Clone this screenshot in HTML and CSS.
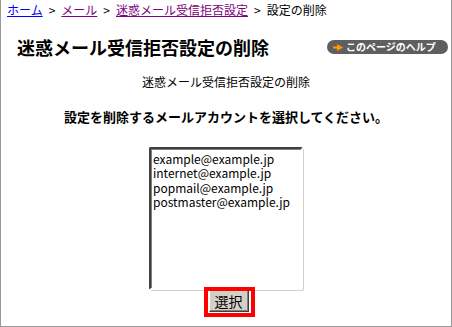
FILE: index.html
```html
<!DOCTYPE html>
<html lang="ja">
<head>
    <meta charset="UTF-8">
    <title>設定の削除</title>
    <link rel="stylesheet" href="styles.css">
</head>
<body>
    <div class="page">
        <div class="crumbs">
            <a href="#" class="link-new">ホーム</a><span class="sep">&gt;</span><a href="#" class="link-visited">メール</a><span class="sep">&gt;</span><a href="#" class="link-visited">迷惑メール受信拒否設定</a><span class="sep">&gt;</span>設定の削除
        </div>

        <div class="page-head">
            <h1>迷惑メール受信拒否設定の削除</h1>
            <a href="#" class="help-btn">
                <svg width="10" height="7" viewBox="0 0 10 7"><path d="M0 2.5h4V0l6 3.5-6 3.5V4.5H0z" fill="#ff9900"/></svg>
                このページのヘルプ
            </a>
        </div>

        <p class="sub-title">迷惑メール受信拒否設定の削除</p>
        <p class="lead">設定を削除するメールアカウントを選択してください。</p>

        <form class="account-form">
            <select class="account-list" size="10">
                <option>example@example.jp</option>
                <option>internet@example.jp</option>
                <option>popmail@example.jp</option>
                <option>postmaster@example.jp</option>
            </select>
            <div class="submit-wrap">
                <button type="button" class="submit-btn">選択</button>
                <span class="highlight"></span>
            </div>
        </form>
    </div>
</body>
</html>
```

FILE: styles.css
```css
* {
    margin: 0;
    padding: 0;
    box-sizing: border-box;
}

body {
    background-color: #fff;
    color: #000;
    font-family: "Noto Sans CJK JP", "Liberation Sans", sans-serif;
}

.page {
    width: 452px;
    height: 327px;
    border: 1px solid #999;
    border-top: none;
}

/* Breadcrumb */
.crumbs {
    padding: 3px 0 0 6px;
    font-size: 12px;
    line-height: 14px;
    white-space: nowrap;
}

.crumbs .sep {
    padding: 0 6px;
}

.link-new {
    color: #0000ff;
}

.link-visited {
    color: #800080;
}

/* Heading row */
.page-head {
    display: flex;
    justify-content: space-between;
    align-items: center;
    margin-top: 20px;
    padding: 0 3px 0 16px;
}

.page-head h1 {
    font-size: 18px;
    line-height: 20px;
    font-weight: bold;
}

.help-btn {
    display: flex;
    align-items: center;
    gap: 3px;
    width: 121px;
    height: 14px;
    padding-left: 6px;
    background-color: #5f5f5f;
    border-radius: 7px;
    color: #fff;
    font-size: 10px;
    font-weight: bold;
    line-height: 14px;
    text-decoration: none;
    white-space: nowrap;
}

.sub-title {
    margin-top: 18px;
    font-size: 12px;
    line-height: 14px;
    text-align: center;
}

.lead {
    margin-top: 20px;
    font-size: 13px;
    line-height: 16px;
    font-weight: bold;
    text-align: center;
}

/* Account list */
.account-form {
    display: flex;
    flex-direction: column;
    align-items: center;
    margin-top: 22px;
}

.account-list {
    width: 154px;
    height: 143px;
    padding: 1px 2px;
    border-style: solid;
    border-width: 2px;
    border-color: #404040 #fff #fff #404040;
    box-shadow: inset 1px 1px 0 #808080, 1px 1px 0 #d4d0c8;
    font-family: "Noto Sans CJK JP", "Liberation Sans", sans-serif;
    font-size: 12px;
    color: #000;
    overflow: hidden;
    outline: none;
}

.account-list option {
    padding: 0;
    line-height: 14px;
    height: 14px;
}

.submit-wrap {
    position: relative;
    margin-left: 5px;
}

.submit-btn {
    display: block;
    width: 40px;
    height: 22px;
    background-color: #d4d0c8;
    border-style: solid;
    border-width: 1px;
    border-color: #fff #404040 #404040 #fff;
    box-shadow: inset -1px -1px 0 #808080;
    font-family: "Noto Sans CJK JP", sans-serif;
    font-size: 14px;
    line-height: 18px;
    color: #000;
}

/* red annotation frame over the button */
.highlight {
    position: absolute;
    top: -3px;
    left: -5px;
    right: -6px;
    bottom: -5px;
    border: 4px solid #ff0000;
}
```
